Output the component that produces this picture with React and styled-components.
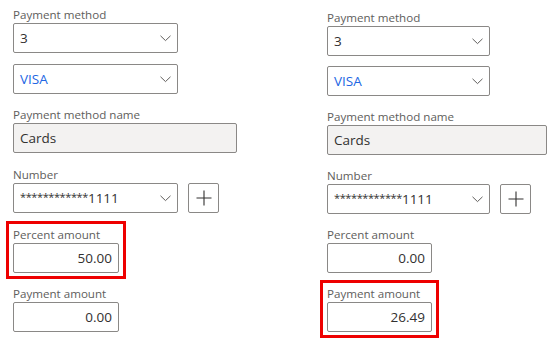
import React from 'react'
import styled, { createGlobalStyle } from 'styled-components'

const Global = createGlobalStyle`
  html, body {
    margin: 0;
    background: #ffffff;
  }
  body {
    font-family: "Segoe UI", "Open Sans", "Noto Sans", sans-serif;
    color: #323130;
  }
`

function Chevron() {
  return (
    <svg width="11" height="7" viewBox="0 0 11 7">
      <path d="M0.5 0.8 L5.5 5.6 L10.5 0.8" fill="none" stroke="#605e5c" strokeWidth="1" />
    </svg>
  )
}

function PlusIcon() {
  return (
    <svg width="16" height="16" viewBox="0 0 16 16">
      <path d="M8 0.5 V15.5 M0.5 8 H15.5" fill="none" stroke="#323130" strokeWidth="1.1" />
    </svg>
  )
}

function Amount({ label, value, marked, gap }) {
  return (
    <Highlight $marked={marked} $gap={gap}>
      <Label>{label}</Label>
      <Box $w="var(--amount-w)" $right>{value}</Box>
    </Highlight>
  )
}

function PaymentPanel({ top, gaps, select, wide, amount, percent, payment, mark }) {
  return (
    <Column $top={top} style={{ '--select-w': select + 'px', '--wide-w': wide + 'px', '--amount-w': amount + 'px' }}>
      <Label>Payment method</Label>
      <Box $w="var(--select-w)">
        <span>3</span>
        <Chevron />
      </Box>
      <Box $w="var(--select-w)" $gap={gaps[0]}>
        <Link>VISA</Link>
        <Chevron />
      </Box>
      <Label $gap={13}>Payment method name</Label>
      <Box $w="var(--wide-w)" $readOnly>Cards</Box>
      <Label $gap={gaps[1]}>Number</Label>
      <Row>
        <Box $w="var(--select-w)">
          <Masked>
            <Stars>************</Stars>1111
          </Masked>
          <Chevron />
        </Box>
        <AddButton>
          <PlusIcon />
        </AddButton>
      </Row>
      <Amount label="Percent amount" value={percent} marked={mark === 'percent'} gap={gaps[2]} />
      <Amount label="Payment amount" value={payment} marked={mark === 'payment'} gap={1} />
    </Column>
  )
}

export default function App() {
  return (
    <>
      <Global />
      <Page>
        <PaymentPanel top={7} gaps={[11, 14, 8]} select={165} wide={224} amount={106} percent="50.00" payment="0.00" mark="percent" />
        <PaymentPanel top={10} gaps={[10, 13, 7]} select={163} wide={220} amount={105} percent="0.00" payment="26.49" mark="payment" />
      </Page>
    </>
  )
}

const Page = styled.div`
  display: flex;
  padding-left: 13px;
  gap: 90px;
  width: 553px;
  height: 343px;
  box-sizing: border-box;
  overflow: hidden;
`

const Column = styled.div`
  display: flex;
  flex-direction: column;
  align-items: flex-start;
  padding-top: ${p => p.$top}px;
  width: 224px;
`

const Label = styled.div`
  font-size: 11.6px;
  line-height: 16px;
  color: #605e5c;
  margin-top: ${p => p.$gap || 0}px;
  white-space: nowrap;
`

const Box = styled.div`
  box-sizing: border-box;
  display: flex;
  align-items: center;
  justify-content: ${p => (p.$right ? 'flex-end' : 'space-between')};
  width: ${p => p.$w};
  height: 30px;
  margin-top: ${p => p.$gap || 0}px;
  padding: 0 6px 0 6px;
  border: 1px solid #8a8886;
  border-radius: 2px;
  background: ${p => (p.$readOnly ? '#f3f2f1' : '#ffffff')};
  font-size: 13.5px;
  color: #323130;
  white-space: nowrap;
`

const Link = styled.span`
  color: #2266e3;
`

const Masked = styled.span`
  display: flex;
  align-items: center;
`

const Stars = styled.span`
  font-size: 11px;
  letter-spacing: -0.4px;
  margin-top: -3px;
`

const Row = styled.div`
  display: flex;
  gap: 10px;
`

const AddButton = styled.div`
  box-sizing: border-box;
  width: 31px;
  height: 30px;
  display: flex;
  align-items: center;
  justify-content: center;
  border: 1px solid #8a8886;
  border-radius: 2px;
  background: #ffffff;
`

const Highlight = styled.div`
  margin: ${p => p.$gap}px 0 0 -7px;
  padding: 3px 4px;
  border: 3px solid ${p => (p.$marked ? '#ee0000' : 'transparent')};
`
